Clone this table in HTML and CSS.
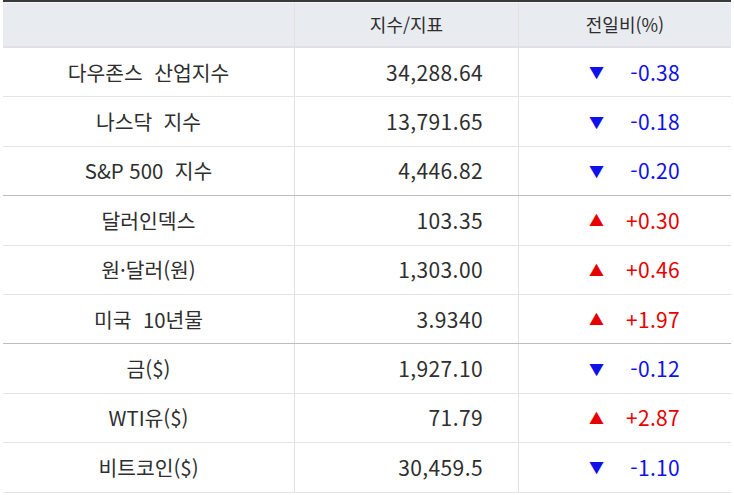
FILE: index.html
```html
<!DOCTYPE html>
<html lang="ko">
<head>
<meta charset="utf-8">
<link rel="stylesheet" href="styles.css">
</head>
<body>
<div class="tbl">
  <div class="row head">
    <div class="c name"></div>
    <div class="c val">지수/지표</div>
    <div class="c chg">전일비(%)</div>
  </div>
  <div class="row">
    <div class="c name">다우존스&nbsp; 산업지수</div>
    <div class="c val num">34,288.64</div>
    <div class="c chg down"><span class="tri">▼</span><span class="pct">-0.38</span></div>
  </div>
  <div class="row">
    <div class="c name">나스닥&nbsp; 지수</div>
    <div class="c val num">13,791.65</div>
    <div class="c chg down"><span class="tri">▼</span><span class="pct">-0.18</span></div>
  </div>
  <div class="row grp">
    <div class="c name">S&amp;P 500&nbsp; 지수</div>
    <div class="c val num">4,446.82</div>
    <div class="c chg down"><span class="tri">▼</span><span class="pct">-0.20</span></div>
  </div>
  <div class="row">
    <div class="c name">달러인덱스</div>
    <div class="c val num">103.35</div>
    <div class="c chg up"><span class="tri">▲</span><span class="pct">+0.30</span></div>
  </div>
  <div class="row">
    <div class="c name">원·달러(원)</div>
    <div class="c val num">1,303.00</div>
    <div class="c chg up"><span class="tri">▲</span><span class="pct">+0.46</span></div>
  </div>
  <div class="row grp">
    <div class="c name">미국&nbsp; 10년물</div>
    <div class="c val num">3.9340</div>
    <div class="c chg up"><span class="tri">▲</span><span class="pct">+1.97</span></div>
  </div>
  <div class="row">
    <div class="c name">금($)</div>
    <div class="c val num">1,927.10</div>
    <div class="c chg down"><span class="tri">▼</span><span class="pct">-0.12</span></div>
  </div>
  <div class="row">
    <div class="c name">WTI유($)</div>
    <div class="c val num">71.79</div>
    <div class="c chg up"><span class="tri">▲</span><span class="pct">+2.87</span></div>
  </div>
  <div class="row">
    <div class="c name">비트코인($)</div>
    <div class="c val num">30,459.5</div>
    <div class="c chg down"><span class="tri">▼</span><span class="pct">-1.10</span></div>
  </div>
</div>
</body>
</html>
```
FILE: styles.css
```css
html, body {
  margin: 0;
  padding: 0;
  background: #fff;
}
body {
  font-family: "Noto Sans CJK KR", "Noto Sans", sans-serif;
  color: #2e2e2e;
  font-size: 20.4px;
}
.tbl {
  margin: 0 3px;
  border-top: 2px solid #3a3a3a;
}
.row {
  display: grid;
  grid-template-columns: 292px 224px 1fr;
  height: 49.4px;
  box-sizing: border-box;
  border-bottom: 1px solid #e4e4e4;
}
.row.grp {
  border-bottom: 1px solid #bdbdbd;
}
.row.head {
  height: 46px;
  font-size: 18px;
  background: #e8ebf0;
  border-top: 1px solid #f4f5f7;
  border-bottom: 2px solid #dfe1e5;
}
.c {
  display: flex;
  align-items: center;
  justify-content: center;
  border-right: 1px solid #e2e2e2;
  padding-bottom: 1px;
}
.c.chg { border-right: none; }
.c.num {
  justify-content: flex-end;
  padding-right: 35px;
  font-size: 21px;
  letter-spacing: 0.4px;
}
.row:not(.head) .chg {
  justify-content: flex-start;
  padding-left: 70px;
}
.tri {
  font-size: 15px;
  width: 27px;
  display: inline-block;
}
.pct {
  width: 64px;
  text-align: right;
  font-size: 21px;
  letter-spacing: 0.3px;
}
.down { color: #1010e8; }
.up { color: #e60000; }
```
